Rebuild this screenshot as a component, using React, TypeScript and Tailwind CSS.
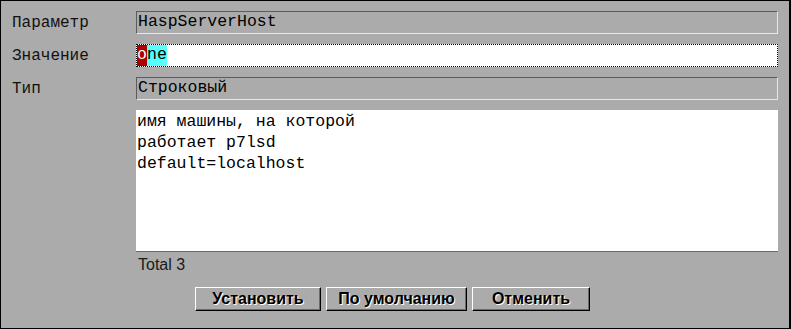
import React from "react";

const mono = "font-['Liberation_Mono','DejaVu_Sans_Mono',monospace]";

function ReadonlyField({ value }: { value: string }) {
  return (
    <div
      className={`flex h-[23px] flex-1 items-center border-t border-l border-t-[#5c5c5c] border-l-[#5c5c5c] border-b border-r border-b-[#e8e8e8] border-r-[#e8e8e8] pl-[1px] text-[16.5px] leading-none text-black ${mono}`}
    >
      {value}
    </div>
  );
}

function Row({ label, children }: { label: string; children: React.ReactNode }) {
  return (
    <div className="flex h-[23px] items-center">
      <div className={`w-[125px] pl-[1px] text-[16px] leading-none text-[#111] ${mono}`}>{label}</div>
      {children}
    </div>
  );
}

function Btn({ label, w }: { label: string; w: string }) {
  return (
    <button
      type="button"
      className={`${w} h-[24px] border border-t-white border-l-white border-b-black border-r-black bg-[#ababab] font-['Liberation_Sans',Arial,sans-serif] text-[16px] font-bold leading-none text-black [text-shadow:1px_1px_0_#ffffff] shadow-[inset_-1px_-1px_0_#6a6a6a]`}
    >
      {label}
    </button>
  );
}

export default function App() {
  return (
    <div className="flex h-[329px] w-[791px] flex-col border-t border-l border-b border-r-2 border-black bg-[#ababab]">
      <div className="flex flex-col gap-[10px] pt-[10px] pl-[10px] pr-[11px]">
        <Row label="Параметр">
          <ReadonlyField value="HaspServerHost" />
        </Row>
        <Row label="Значение">
          <div
            className={`flex h-[23px] flex-1 items-stretch border border-dotted border-black bg-white text-[16.5px] leading-none ${mono}`}
          >
            <span className="flex w-[10px] items-center justify-center bg-[#aa0000] text-white">o</span>
            <span className="flex items-center bg-[#55ffff] text-black">ne</span>
          </div>
        </Row>
        <Row label="Тип">
          <ReadonlyField value="Строковый" />
        </Row>
        <div className="flex">
          <div className="w-[125px]" />
          <div
            className={`h-[142px] flex-1 border-b border-b-[#6a6a6a] bg-white px-[1px] pt-[1px] text-[16.5px] leading-[21px] text-black ${mono}`}
          >
            <div>имя машины, на которой</div>
            <div>работает p7lsd</div>
            <div>default=localhost</div>
          </div>
        </div>
      </div>
      <div className="pl-[137px] pt-[3px] font-['Liberation_Sans',Arial,sans-serif] text-[16px] leading-[20px] text-[#1a1a1a]">
        Total 3
      </div>
      <div className="flex gap-[5px] pl-[194px] pt-[12px]">
        <Btn label="Установить" w="w-[126px]" />
        <Btn label="По умолчанию" w="w-[141px]" />
        <Btn label="Отменить" w="w-[118px]" />
      </div>
    </div>
  );
}
